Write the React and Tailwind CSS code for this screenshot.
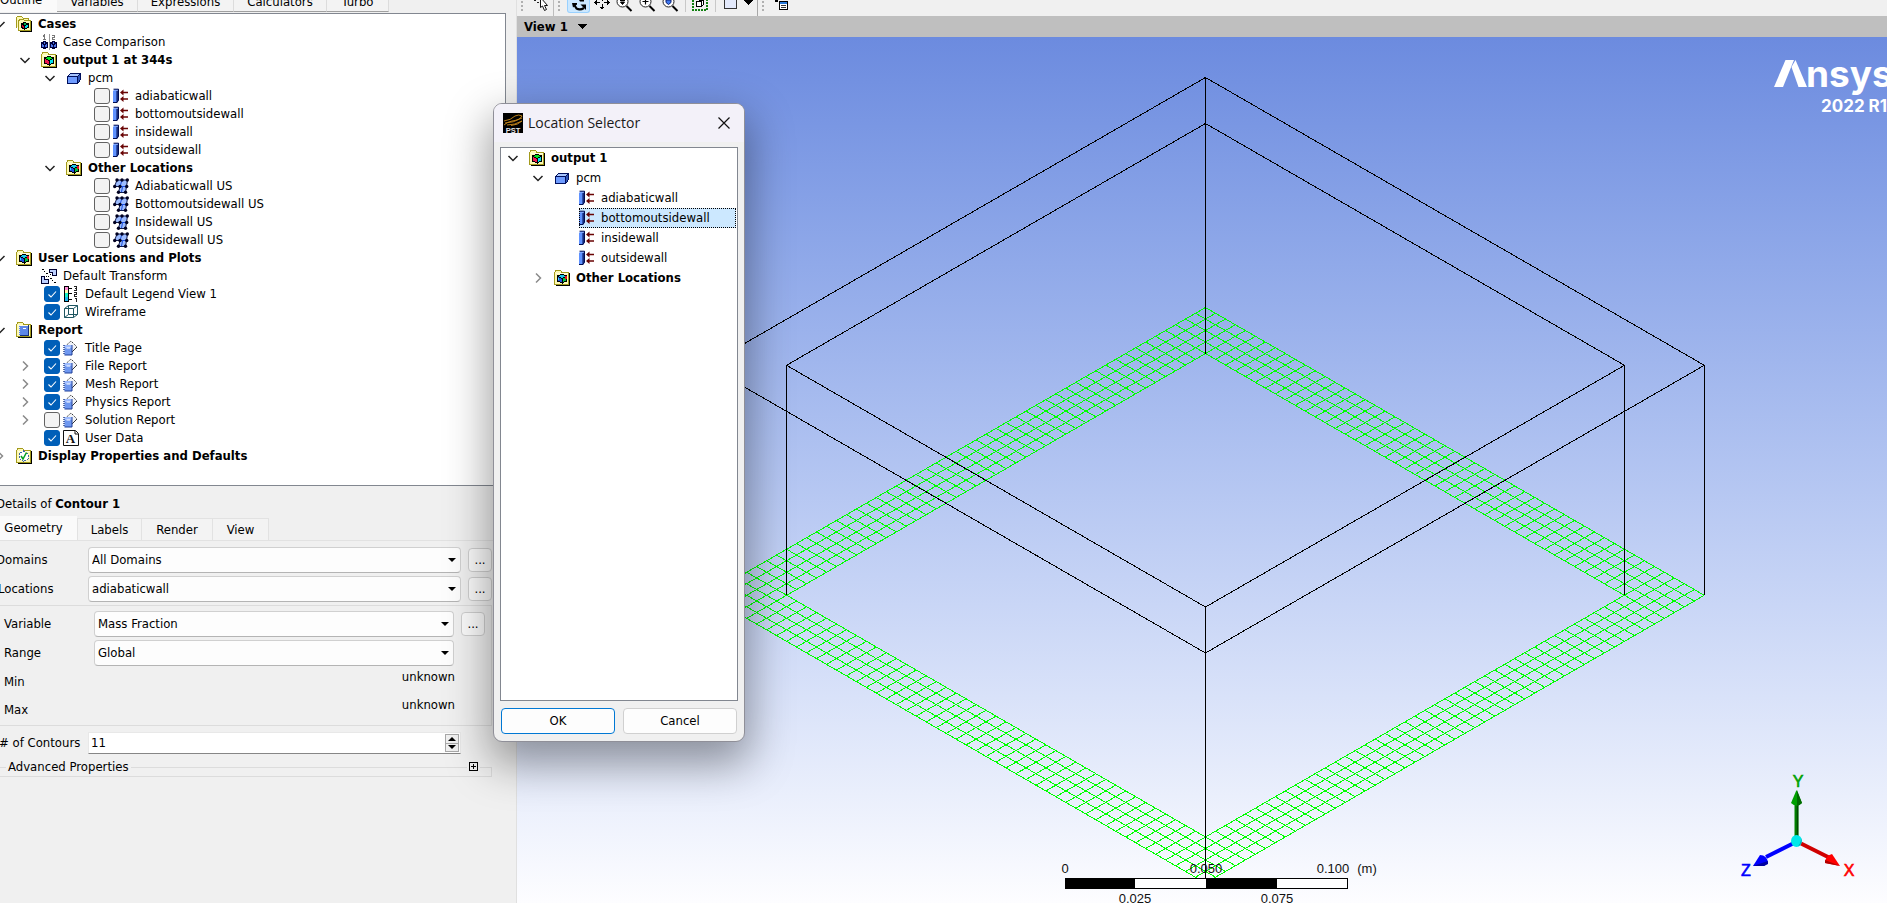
import { useState } from "react";

/* ---------- small drawings ---------- */

function Svg({ children, className = "h-4 w-4", box = "0 0 16 16", crisp = true }) {
  return (
    <svg viewBox={box} className={`shrink-0 ${className}`} fill="none" shapeRendering={crisp ? "crispEdges" : "auto"} aria-hidden="true">
      {children}
    </svg>
  );
}

function Folder({ children }) {
  return (
    <Svg>
      <path d="M2 15.5H15.5V3" stroke="#000" />
      <path d="M.5 14.5V2.5L2 .5H6.500L8 2.500H14.500V14.500Z" fill="#fdf9b4" stroke="#a39a1c" />
      <path d="M1.500 3.500H13.500" stroke="#fffde0" />
      {children}
    </Svg>
  );
}

function Cube({ top, left, right }) {
  return (
    <g stroke="#000" strokeWidth="1">
      <path d="M3.500 6L8 4L12.500 6L8 8.500Z" fill={top} />
      <path d="M3.500 6L8 8.500V13L3.500 11Z" fill={left} />
      <path d="M12.500 6L8 8.500V13L12.500 11Z" fill={right} />
    </g>
  );
}

const icons = {
  cases: (
    <Svg>
      <path d="M.5 12V1.500L2 .5H5.500L7 2H12.500V4" fill="#fdf9b4" stroke="#a39a1c" />
      <path d="M4 15.500H15.500V5" stroke="#000" />
      <path d="M2.500 14.500V5L4 3.500H7.500L9 4.500H14.500V14.500Z" fill="#fdf9b4" stroke="#a39a1c" />
      <path d="M5.500 8L8.500 6.500L12 8L8.500 9.500Z" fill="#00b050" stroke="#000" />
      <path d="M5.500 8L8.500 9.500V13L5.500 11.500Z" fill="#e0002c" stroke="#000" />
      <path d="M12 8L8.500 9.500V13L12 11.500Z" fill="#00d8e8" stroke="#000" />
    </Svg>
  ),
  compare: (
    <Svg>
      <path d="M2 2.500L3.500 1V5.500M2 5.500H5M11 1.500H13.500V3.500H11.500V5.500H14" stroke="#777" />
      <path d="M8 0V16" stroke="#9a9a9a" />
      <g stroke="#00003c">
        <path d="M.5 9L3.500 7.500L6.500 9V13L3.500 14.500L.5 13Z" fill="#4d74e8" />
        <path d="M.5 9L3.500 10.500L6.500 9M3.500 10.500V14.500" />
        <path d="M9.500 9L12.500 7.500L15.500 9V13L12.500 14.500L9.500 13Z" fill="#4d74e8" />
        <path d="M9.500 9L12.500 10.500L15.500 9M12.500 10.500V14.500" />
      </g>
    </Svg>
  ),
  folderCube: (
    <Folder>
      <Cube top="#00e020" left="#f01850" right="#00e0f0" />
    </Folder>
  ),
  folderCubeAlt: (
    <Folder>
      <Cube top="#18c8e8" left="#2050e0" right="#00c040" />
      <path d="M11 6H13V9H11Z" fill="#e81020" />
      <path d="M4 8H5V10H4Z" fill="#30e0ff" />
    </Folder>
  ),
  box: (
    <Svg>
      <path d="M1.500 6.500L5 3.500H14.500V9.500L11.500 13.500H1.500Z" fill="#6f9cff" stroke="#00105c" />
      <path d="M2 6L5 4H14L11.500 6.500Z" fill="#a9c6ff" />
      <path d="M12 6.500L14 4.500V9.500L12 12.500Z" fill="#2f55b8" />
      <path d="M1.500 6.500H11.500V13.500M11.500 6.500L14.500 3.500" stroke="#00105c" />
    </Svg>
  ),
  wall: (
    <Svg crisp={false}>
      <path d="M0 3H4V15H0Z" fill="#5f92ff" />
      <path d="M0 3L1.500 1H6L4 3Z" fill="#7fa8ff" />
      <path d="M4 3L6 1V12L4 15Z" fill="#2a4cab" />
      <path d="M.5 1.200H5.500V12L4 14.500H0M4 3V14" stroke="#000c50" />
      <path d="M7 4.500L10.500 1.500V7.500ZM7 11L10.500 8V14Z" fill="#6a0505" />
      <path d="M10 4.500H15M10 11H15" stroke="#6a0505" strokeWidth="1.500" />
    </Svg>
  ),
  surface: (
    <Svg crisp={false}>
      <path d="M4 2H14.500L13.500 8.500L12.500 14.500H5.500L7 8.500H1.500Z" fill="#9dbcff" />
      <path d="M9 2L7 8.500H13.500M9.500 9L8.500 14" stroke="#1b50e0" />
      <path d="M4 2H14.500L13.500 8.500L12.500 14.500H5.500L7 8.500H1.500Z" stroke="#101c50" />
      <g fill="#000020">
        <circle cx="4" cy="2" r="1.700" />
        <circle cx="9" cy="2" r="1.700" />
        <circle cx="14.300" cy="2" r="1.700" />
        <circle cx="1.700" cy="8.500" r="1.700" />
        <circle cx="7" cy="8.500" r="1.700" />
        <circle cx="13.700" cy="8.500" r="1.700" />
        <circle cx="5.500" cy="14.300" r="1.700" />
        <circle cx="12.500" cy="14.300" r="1.700" />
      </g>
    </Svg>
  ),
  transform: (
    <Svg>
      <path d="M8.500 1.500H15.500V7.500H11.500V4.500H8.500Z" fill="#bcd0ff" stroke="#000030" />
      <path d="M.5 8.500H3.500V11.500H7.500V15.500H.5Z" fill="#bcd0ff" stroke="#000030" />
      <path d="M1 1h2v1h-2zM3 3h1v1h-1zM5 5h2v1h-2zM7 8h1v1h-1zM9 10h2v1h-2zM11 12h1v1h-1zM13 14h2v1h-2zM5 8h1v1h-1zM9 6h1v1h-1z" fill="#000" />
    </Svg>
  ),
  legend: (
    <Svg>
      <path d="M1 1H6V4H1Z" fill="#ff8cd8" />
      <path d="M1 4H6V7H1Z" fill="#fff6b0" />
      <path d="M1 7H6V11H1Z" fill="#18f0c8" />
      <path d="M1 11H6V15H1Z" fill="#18b8f0" />
      <path d="M1.500 .5H5.500V15.500H1.500ZM6 2.500H9M6 7.500H9M6 13.500H9" stroke="#000" />
      <path d="M11 .5H13.500V4.500H11M12 2.500H13.500M11 6.500H13.500V8.500H11.500V10.500H14M12 12.500H13.500V16" stroke="#222" />
    </Svg>
  ),
  wireframe: (
    <Svg crisp={false}>
      <path d="M1.500 4.500H10.500V13.500H1.500ZM5.500 1.500H14.500V10.500H5.500ZM1.500 4.500L5.500 1.500M10.500 4.500L14.500 1.500M10.500 13.500L14.500 10.500M1.500 13.500L5.500 10.500" stroke="#1d5560" />
    </Svg>
  ),
  folderReport: (
    <Folder>
      <path d="M3 3.500H12V12.500H3Z" fill="#5d88e8" />
      <path d="M12.500 3V13.500H3.500" stroke="#16307c" />
      <path d="M3.500 3V13" stroke="#dfe9ff" strokeDasharray="1 1" />
      <path d="M6.500 6.500H10" stroke="#fff" />
    </Folder>
  ),
  report: (
    <Svg crisp={false}>
      <path d="M2 7L8 1L14 7L9 12.500Z" fill="#f1f3f7" />
      <path d="M2 6.500L8 1L14 7" stroke="#333" strokeDasharray="1.400 1" />
      <path d="M14 7L9 12" stroke="#333" />
      <path d="M1.500 5H9V15H1.500Z" fill="#6f98f0" />
      <path d="M2 5H9V8H2Z" fill="#9dbbff" />
      <path d="M9 5V15H1.500" stroke="#1f3f98" />
      <path d="M1 5V15" stroke="#26428c" strokeWidth="1.500" strokeDasharray="1 1" />
      <path d="M3.500 8H7" stroke="#fff" />
    </Svg>
  ),
  userData: (
    <Svg crisp={false}>
      <path d="M.5 .5H12.500L15.500 3.500V15.500H.5Z" fill="#fff" stroke="#111" />
      <path d="M12 1V4H15" stroke="#111" />
      <text x="7.500" y="13" textAnchor="middle" fontFamily="Liberation Serif, serif" fontWeight="bold" fontSize="13" fill="#111">A</text>
    </Svg>
  ),
  folderCheck: (
    <Folder>
      <path d="M7.500 3L12 6.500V11L7.500 13.500L3 10.500V6Z" fill="#fff" stroke="#3a66a8" strokeDasharray="2 1" />
      <path d="M5 8L7 11L10.500 4.500" stroke="#00a020" strokeWidth="1.500" shapeRendering="auto" />
    </Folder>
  ),
};

function Chevron({ open }) {
  return (
    <Svg className="h-3 w-3" box="0 0 12 12" crisp={false}>
      {open ? <path d="M1.500 4L6 8.500L10.500 4" stroke="#222" strokeWidth="1.500" /> : <path d="M4 1.500L8.500 6L4 10.500" stroke="#8a8a8a" strokeWidth="1.500" />}
    </Svg>
  );
}

/* ---------- trees ---------- */

const outline = [
  { level: 0, open: true, icon: "cases", text: "Cases", bold: true },
  { level: 1, icon: "compare", text: "Case Comparison" },
  { level: 1, open: true, icon: "folderCube", text: "output 1 at 344s", bold: true },
  { level: 2, open: true, icon: "box", text: "pcm" },
  { level: 3, check: false, icon: "wall", text: "adiabaticwall" },
  { level: 3, check: false, icon: "wall", text: "bottomoutsidewall" },
  { level: 3, check: false, icon: "wall", text: "insidewall" },
  { level: 3, check: false, icon: "wall", text: "outsidewall" },
  { level: 2, open: true, icon: "folderCubeAlt", text: "Other Locations", bold: true },
  { level: 3, check: false, icon: "surface", text: "Adiabaticwall US" },
  { level: 3, check: false, icon: "surface", text: "Bottomoutsidewall US" },
  { level: 3, check: false, icon: "surface", text: "Insidewall US" },
  { level: 3, check: false, icon: "surface", text: "Outsidewall US" },
  { level: 0, open: true, icon: "folderCubeAlt", text: "User Locations and Plots", bold: true },
  { level: 1, icon: "transform", text: "Default Transform" },
  { level: 1, check: true, icon: "legend", text: "Default Legend View 1" },
  { level: 1, check: true, icon: "wireframe", text: "Wireframe" },
  { level: 0, open: true, icon: "folderReport", text: "Report", bold: true },
  { level: 1, check: true, icon: "report", text: "Title Page" },
  { level: 1, open: false, check: true, icon: "report", text: "File Report" },
  { level: 1, open: false, check: true, icon: "report", text: "Mesh Report" },
  { level: 1, open: false, check: true, icon: "report", text: "Physics Report" },
  { level: 1, open: false, check: false, icon: "report", text: "Solution Report" },
  { level: 1, check: true, icon: "userData", text: "User Data" },
  { level: 0, open: false, icon: "folderCheck", text: "Display Properties and Defaults", bold: true },
];

const locations = [
  { level: 0, open: true, icon: "folderCube", text: "output 1", bold: true },
  { level: 1, open: true, icon: "box", text: "pcm" },
  { level: 2, icon: "wall", text: "adiabaticwall" },
  { level: 2, icon: "wall", text: "bottomoutsidewall", selected: true },
  { level: 2, icon: "wall", text: "insidewall" },
  { level: 2, icon: "wall", text: "outsidewall" },
  { level: 1, open: false, icon: "folderCubeAlt", text: "Other Locations", bold: true },
];

const indent = ["ml-0", "ml-[25px]", "ml-[50px]", "ml-[75px]"];

function TreeRow({ row, className }) {
  const [checked, setChecked] = useState(row.check);
  const hasCheck = row.check !== undefined;
  const label = (
    <>
      {icons[row.icon]}
      <span className={`pl-1.5 whitespace-nowrap ${row.bold ? "font-bold" : ""}`}>{row.text}</span>
    </>
  );
  return (
    <li className={`flex items-center ${className}`}>
      <span className={`flex w-8 shrink-0 justify-center ${indent[row.level]}`}>{row.open !== undefined && <Chevron open={row.open} />}</span>
      {hasCheck ? (
        <label className="flex items-center pl-[3px]">
          <span className="mr-[3px] grid h-4 w-4">
            <input
              type="checkbox"
              checked={checked}
              onChange={() => setChecked(!checked)}
              className="col-start-1 row-start-1 h-4 w-4 appearance-none rounded-[3px] border border-[#626262] bg-[#f3f3f3] checked:border-[#005fb8] checked:bg-[#005fb8]"
            />
            {checked && (
              <svg viewBox="0 0 16 16" className="pointer-events-none col-start-1 row-start-1 h-4 w-4" fill="none" aria-hidden="true">
                <path d="M4.500 8.500L7 11L12 5.500" stroke="#fff" strokeWidth="1.100" />
              </svg>
            )}
          </span>
          {label}
        </label>
      ) : (
        <span className={`flex items-center ${row.selected ? "h-full flex-1 bg-[#cce8ff] outline-1 -outline-offset-1 outline-dotted outline-black" : ""}`}>{label}</span>
      )}
    </li>
  );
}

/* ---------- details form ---------- */

function Dropdown({ id, value }) {
  return (
    <span className="grid min-w-0 flex-1 items-center">
      <select id={id} defaultValue={value} className="col-start-1 row-start-1 h-[26px] w-full appearance-none rounded-[4px] border border-[#d0d0d0] border-b-[#b4b4b4] bg-[#fdfdfd] pl-[3px]">
        <option>{value}</option>
      </select>
      <svg viewBox="0 0 8 4" className="pointer-events-none col-start-1 row-start-1 mr-[5px] h-1 w-2 justify-self-end" aria-hidden="true">
        <path d="M0 0H8L4 4Z" fill="#000" />
      </svg>
    </span>
  );
}

function MoreButton({ label }) {
  return (
    <button type="button" aria-label={label} className="ml-[7px] flex h-6 w-6 shrink-0 items-center justify-center rounded-[4px] border border-[#cfcfcf] bg-[#fbfbfb]">
      ...
    </button>
  );
}

function DetailsPanel() {
  return (
    <section className="mr-6">
      <h2 className="-ml-1 h-[31px] pt-[9px]">
        Details of <b>Contour 1</b>
      </h2>
      <div role="tablist" className="-mr-[14px] flex h-6 items-end border-b border-[#e2e2e2] text-center">
        <button role="tab" aria-selected="true" className="h-6 w-[77px] bg-[#fafafa] pr-2.5 pl-0">Geometry</button>
        <button role="tab" className="h-[22px] w-[65px] border border-b-0 border-[#e2e2e2] bg-[#f3f3f3]">Labels</button>
        <button role="tab" className="h-[22px] w-[71px] border-t border-r border-[#e2e2e2] bg-[#f3f3f3]">Render</button>
        <button role="tab" className="h-[22px] w-[56px] border-t border-r border-[#e2e2e2] bg-[#f3f3f3]">View</button>
      </div>
      <div className="flex flex-col gap-[3px] pt-1.5">
        <div className="flex items-center">
          <label htmlFor="domains" className="-ml-1 w-[92px]">Domains</label>
          <Dropdown id="domains" value="All Domains" />
          <MoreButton label="Choose domains" />
        </div>
        <div className="flex items-center">
          <label htmlFor="locations" className="-ml-1 w-[92px] pl-[2px]">Locations</label>
          <Dropdown id="locations" value="adiabaticwall" />
          <MoreButton label="Choose locations" />
        </div>
      </div>
      <div className="mt-[3px] border border-l-0 border-[#dcdcdc] pt-[5px] pr-1.5 pb-px pl-1">
        <div className="flex flex-col gap-[3px]">
          <div className="flex items-center">
            <label htmlFor="variable" className="w-[90px]">Variable</label>
            <Dropdown id="variable" value="Mass Fraction" />
            <MoreButton label="Choose variable" />
          </div>
          <div className="mr-[31px] flex items-center">
            <label htmlFor="range" className="w-[90px]">Range</label>
            <Dropdown id="range" value="Global" />
          </div>
        </div>
        <dl className="mt-[2px] mr-[30px]">
          <div className="flex h-7 justify-between">
            <dt className="pt-[5px]">Min</dt>
            <dd>unknown</dd>
          </div>
          <div className="flex h-7 justify-between">
            <dt className="pt-[5px]">Max</dt>
            <dd>unknown</dd>
          </div>
        </dl>
      </div>
      <div className="mt-1.5 mr-[31px] flex items-center">
        <label htmlFor="contours" className="-ml-1 w-[92px] pl-[3px] whitespace-nowrap"># of Contours</label>
        <span className="flex h-[22px] min-w-0 flex-1 items-center border border-[#e8e8e8] border-b-[#868686] bg-white pr-px">
          <input id="contours" type="text" inputMode="numeric" defaultValue="11" className="min-w-0 flex-1 bg-transparent pl-[2px] outline-none" />
          <span className="flex h-[18px] w-3.5 flex-col border border-[#a8a8a8] bg-[#f0f0f0]">
            <button type="button" aria-label="More contours" className="flex flex-1 items-center justify-center border-b border-[#a8a8a8]">
              <svg viewBox="0 0 8 4" className="h-1 w-2" aria-hidden="true"><path d="M0 4H8L4 0Z" fill="#000" /></svg>
            </button>
            <button type="button" aria-label="Fewer contours" className="flex flex-1 items-center justify-center">
              <svg viewBox="0 0 8 4" className="h-1 w-2" aria-hidden="true"><path d="M0 0H8L4 4Z" fill="#000" /></svg>
            </button>
          </span>
        </span>
      </div>
      <fieldset className="relative mt-1 h-[19px] border border-l-0 border-[#dcdcdc]">
        <legend className="ml-1.5 px-[2px]">Advanced Properties</legend>
        <button type="button" aria-label="Expand advanced properties" className="absolute -top-[14px] right-[11px] bg-[#f0f0f0] px-[2px]">
          <Svg className="h-[9px] w-[9px]" box="0 0 9 9">
            <path d="M.5 .5H8.500V8.500H.5ZM2 4.500H7M4.500 2V7" stroke="#000" />
          </Svg>
        </button>
      </fieldset>
    </section>
  );
}

/* ---------- viewer ---------- */

function Grip() {
  return (
    <Svg className="h-3 w-[3px]" box="0 0 3 12">
      <path d="M0 1h2v2h-2zM0 5h2v2h-2zM0 9h2v2h-2z" fill="#b0b0b0" />
    </Svg>
  );
}

function Lens({ children }) {
  return (
    <Svg className="h-3 w-[17px]" box="0 0 17 12" crisp={false}>
      <circle cx="6.500" cy="1.500" r="5.500" fill="#fff" stroke="#222" />
      <path d="M10.500 6L15.500 11" stroke="#000" strokeWidth="2" />
      {children}
    </Svg>
  );
}

function Toolbar() {
  return (
    <div role="toolbar" className="flex h-4 items-start overflow-hidden bg-[#f0f0f0] pl-1">
      <Grip />
      <button type="button" aria-label="Select" className="ml-[9px]">
        <Svg className="h-3 w-4" box="0 0 16 12" crisp={false}>
          <path d="M1 0h2v1h-2zM4 2h2v1h-2z" fill="#222" />
          <path d="M7.500 -3V7.500L9.500 6L11.500 10.500L13.500 9.500L11.500 5.500H14.500L8 -2" fill="#fff" stroke="#111" />
        </Svg>
      </button>
      <span className="ml-1 h-4 w-px shrink-0 bg-[#bdbdbd]" />
      <span className="ml-1"><Grip /></span>
      <button type="button" aria-label="Rotate" className="ml-1.5 flex h-[13px] w-[23px] shrink-0 justify-center rounded-b-[3px] border border-t-0 border-[#99d1ff] bg-[#cce8ff]">
        <Svg className="h-3 w-4" box="0 0 16 12" crisp={false}>
          <path d="M3 4.500L5.500 8.500Q9 10.500 13 8" stroke="#000" strokeWidth="2.200" />
          <path d="M9.500 4.500H15V10Z" fill="#000" />
          <path d="M1 3H6V4.500L2 7.500Z" fill="#000" />
          <path d="M8 0H13V1.500H9Z" fill="#000" />
        </Svg>
      </button>
      <button type="button" aria-label="Pan" className="ml-1">
        <Svg className="h-3 w-4" box="0 0 16 12">
          <path d="M3 2.500H6M10 2.500H13M8 0V1M8 4V8" stroke="#000" />
          <path d="M0 2.500L3 0V5ZM16 2.500L13 0V5ZM8 10L5 6.500H11Z" fill="#000" />
        </Svg>
      </button>
      <button type="button" aria-label="Zoom" className="ml-1.5">
        <Lens><path d="M4 .5H9M4.500 2H8.500L6.500 4.500Z" stroke="#000" fill="#000" /></Lens>
      </button>
      <button type="button" aria-label="Zoom in" className="ml-1.5">
        <Lens><path d="M3.500 1.500H9.500M6.500 0V4.500" stroke="#000" strokeWidth="1.200" /></Lens>
      </button>
      <button type="button" aria-label="Fit view" className="ml-1.5">
        <Lens><path d="M4 0H9V2.500L6.500 4.500L4 2.500Z" fill="#3f78f0" stroke="#0a1f70" /></Lens>
      </button>
      <span className="ml-1.5 h-3 w-px shrink-0 bg-[#c8c8c8]" />
      <button type="button" aria-label="Toggle highlighting" className="ml-1.5">
        <Svg className="h-3 w-4" box="0 0 16 12">
          <path d="M1 0V10H15V0" stroke="#108010" strokeWidth="2" strokeDasharray="2 1" />
          <path d="M4.500 1.500H9.500V6.500H4.500ZM6.500 0H11.500V4.500L9.500 6.500" fill="#fff" stroke="#000" />
        </Svg>
      </button>
      <span className="ml-[7px] h-3 w-px shrink-0 bg-[#c8c8c8]" />
      <button type="button" aria-label="Viewport layout" className="ml-2 flex gap-1.5">
        <span className="h-[9px] w-[13px] border border-t-0 border-[#333] bg-[#e3e9fb]" />
        <Svg className="h-[5px] w-[10px]" box="0 0 10 5"><path d="M0 0H10L5 5Z" fill="#000" /></Svg>
      </button>
      <span className="ml-1 h-4 w-px shrink-0 bg-[#a8a8a8]" />
      <span className="ml-1"><Grip /></span>
      <button type="button" aria-label="Viewer options" className="ml-2.5">
        <Svg className="h-3 w-[14px]" box="0 0 14 12">
          <path d="M0 0h3v2h-3z" fill="#000" />
          <path d="M4.500 1.500H12.500V9.500H4.500Z" fill="#fff" stroke="#000" />
          <path d="M5 2h7v2h-7z" fill="#2878d8" />
          <path d="M6 5.500H11M6 7.500H11" stroke="#333" />
        </Svg>
      </button>
    </div>
  );
}

/* The slab is a square ring seen in isometric view: 50 cells a side, 4 cells thick. */
const CELLS = 50;
const RING = 4;
const iso = (u, v, y0) => [1205.5 + (u - v) * 9.975, y0 + (u + v) * 5.755];
const seg = (a, b) => `M${a[0].toFixed(1)} ${a[1].toFixed(1)}L${b[0].toFixed(1)} ${b[1].toFixed(1)}`;
const square = (lo, hi, y0) => {
  const c = [iso(lo, lo, y0), iso(hi, lo, y0), iso(hi, hi, y0), iso(lo, hi, y0)];
  return c.map((p, i) => seg(p, c[(i + 1) % 4])).join("");
};

const TOP = 77.5;
const BOTTOM = 307.5;
const meshPath = (() => {
  const y = BOTTOM;
  let d = "";
  for (let i = 0; i <= CELLS; i++) {
    if (i <= RING || i >= CELLS - RING) {
      d += seg(iso(i, 0, y), iso(i, CELLS, y)) + seg(iso(0, i, y), iso(CELLS, i, y));
    } else {
      d += seg(iso(i, 0, y), iso(i, RING, y)) + seg(iso(i, CELLS - RING, y), iso(i, CELLS, y));
      d += seg(iso(0, i, y), iso(RING, i, y)) + seg(iso(CELLS - RING, i, y), iso(CELLS, i, y));
    }
  }
  return d;
})();
const wirePath = (() => {
  let d = square(0, CELLS, TOP) + square(RING, CELLS - RING, TOP);
  for (const [lo, hi] of [[0, CELLS], [RING, CELLS - RING]]) {
    for (const [u, v] of [[lo, lo], [hi, lo], [hi, hi], [lo, hi]]) d += seg(iso(u, v, TOP), iso(u, v, BOTTOM));
  }
  return d;
})();

function Scene() {
  return (
    <svg viewBox="517 37 1370 866" preserveAspectRatio="xMaxYMin slice" className="block h-full w-full" fill="none" role="img" aria-label="Wireframe model">
      <g shapeRendering="crispEdges">
        <path d={meshPath} stroke="#00ff00" />
        <path d={wirePath} stroke="#000" />
        <rect x="1065.500" y="878.500" width="282" height="10" fill="#fff" stroke="#000" />
        <path d="M1065 878H1135V889H1065ZM1206 878H1277V889H1206Z" fill="#000" />
      </g>
      <g fontFamily="Liberation Sans, Arial, sans-serif" fontSize="13" fill="#111" textAnchor="middle">
        <text x="1065" y="873">0</text>
        <text x="1206" y="873">0.050</text>
        <text x="1333" y="873">0.100</text>
        <text x="1367" y="873">(m)</text>
        <text x="1135" y="903">0.025</text>
        <text x="1277" y="903">0.075</text>
      </g>
      <g>
        <path d="M1796.500 838V800" stroke="#008000" strokeWidth="4" />
        <path d="M1797.500 838V800" stroke="#004800" strokeWidth="1.500" />
        <path d="M1796.500 790L1791 803Q1796.500 808 1802 803Z" fill="#00a000" />
        <path d="M1797 790L1802 803Q1799 806 1797 806Z" fill="#006a00" />
        <path d="M1796 842L1766 857" stroke="#0000ff" strokeWidth="4" />
        <path d="M1753 866L1760 855Q1767 855 1768 863L1764 866Z" fill="#0000ff" />
        <path d="M1753 866L1768 861V864L1764 866Z" fill="#0000a0" />
        <path d="M1798 842L1830 858" stroke="#d00000" strokeWidth="4" />
        <path d="M1840 866L1832 854Q1825 856 1825 863Z" fill="#ff0000" />
        <path d="M1840 866L1825 863V860Z" fill="#b00000" />
        <ellipse cx="1796.500" cy="841" rx="5.500" ry="6" fill="#00e8e8" />
        <path d="M1798 846.500Q1802 844 1801.500 838Q1801 843 1798 846.500Z" fill="#009a9a" />
      </g>
      <g fontFamily="Liberation Sans, Arial, sans-serif" fontSize="16" textAnchor="middle" strokeWidth=".6">
        <text x="1798" y="787" fill="#00a000" stroke="#00a000">Y</text>
        <text x="1746" y="876" fill="#0000ff" stroke="#0000ff">Z</text>
        <text x="1849" y="876" fill="#ff0000" stroke="#ff0000">X</text>
      </g>
      <g fill="#fff">
        <path d="M1774 87L1785.500 60H1794L1783 87Z" />
        <path d="M1791.500 67L1795.500 60L1807 87H1798.500Z" />
        <text x="1806" y="87" fontFamily="Inter, sans-serif" fontWeight="700" fontSize="37">nsys</text>
        <text x="1821" y="112" fontFamily="Inter, sans-serif" fontWeight="700" fontSize="17">2022 R1</text>
      </g>
    </svg>
  );
}

/* ---------- dialog ---------- */

function LocationSelector() {
  return (
    <div role="dialog" aria-labelledby="dialog-title" className="absolute top-[103px] left-[493px] flex w-[252px] flex-col overflow-hidden rounded-[9px] border border-[#8f8f98] bg-[#f0f0f0] shadow-[0_18px_44px_4px_rgba(0,0,0,0.38)]">
      <header className="flex h-[38px] items-center bg-[#f3f1f9] pr-3.5 pl-[9px]">
        <Svg className="h-5 w-5" box="0 0 20 20" crisp={false}>
          <path d="M0 0H20V20H0Z" fill="#000" />
          <path d="M1 8Q8 7 12 3Q16 1 19 3Q17 7 9 8Q4 9 1 12M2 10Q10 10 19 5M4 12Q12 12 19 8Q15 12 8 12.500" stroke="#c98a1c" strokeWidth=".9" />
          <text x="10" y="19.500" textAnchor="middle" fontFamily="Liberation Sans, sans-serif" fontWeight="bold" fontSize="7.500" fill="#e8e8e8">PST</text>
        </Svg>
        <h1 id="dialog-title" className="flex-1 pl-[5px] font-['Open_Sans','Noto_Sans',sans-serif] text-sm text-[#1a1a1a]">Location Selector</h1>
        <button type="button" aria-label="Close">
          <Svg className="h-3 w-3" box="0 0 12 12" crisp={false}>
            <path d="M.5 .5L11.500 11.500M11.500 .5L.5 11.500" stroke="#111" strokeWidth="1.200" />
          </Svg>
        </button>
      </header>
      <ul className="mx-1.5 mt-[5px] h-[554px] overflow-hidden border border-[#828790] bg-white pr-px">
        {locations.map((row) => (
          <TreeRow key={row.text} row={row} className="-ml-1 h-5" />
        ))}
      </ul>
      <footer className="flex gap-2 p-[7px]">
        <button type="button" className="h-[26px] flex-1 rounded-[4px] border border-[#0078d4] bg-[#fdfdfd]">OK</button>
        <button type="button" className="h-[26px] flex-1 rounded-[4px] border border-[#d0d0d0] bg-[#fdfdfd]">Cancel</button>
      </footer>
    </div>
  );
}

/* ---------- page ---------- */

const sideTabs = [
  { name: "Variables", width: "w-[81px]" },
  { name: "Expressions", width: "w-[96px]" },
  { name: "Calculators", width: "w-[93px]" },
  { name: "Turbo", width: "w-[62px]" },
];

export default function App() {
  return (
    <main className="relative flex h-screen overflow-hidden bg-[#f0f0f0] font-['DejaVu_Sans_Condensed','DejaVu_Sans',sans-serif] text-[13px] leading-[18px] text-black">
      <div className="flex w-[517px] shrink-0 flex-col overflow-hidden border-r border-[#e0e0e0]">
        <div role="tablist" className="flex h-[13px] shrink-0 items-end overflow-hidden pb-px">
          <button role="tab" aria-selected="true" className="flex h-6 w-[57px] items-end bg-[#fafafa] pb-[3px]">Outline</button>
          {sideTabs.map(({ name, width }) => (
            <button key={name} role="tab" className={`flex h-6 items-end justify-center border-r border-b border-r-[#dcdcdc] border-b-[#a0a0a0] bg-[#f3f3f3] ${width}`}>
              {name}
            </button>
          ))}
        </div>
        <ul className="mr-[10px] h-[473px] shrink-0 overflow-hidden border border-l-0 border-[#828790] bg-white pt-px">
          {outline.map((row) => (
            <TreeRow key={row.text} row={row} className="-ml-4 h-[18px]" />
          ))}
        </ul>
        <DetailsPanel />
      </div>
      <div className="flex min-w-0 flex-1 flex-col">
        <Toolbar />
        <div className="flex h-[21px] shrink-0 items-center gap-2.5 bg-[#bfbfbf] pl-[7px]">
          <b>View 1</b>
          <Svg className="h-[5px] w-[9px]" box="0 0 9 5"><path d="M0 0H9L4.500 5Z" fill="#000" /></Svg>
        </div>
        <div className="min-h-0 flex-1 bg-linear-to-b from-[#6c8bdf] to-[#fdfdff]">
          <Scene />
        </div>
      </div>
      <LocationSelector />
    </main>
  );
}
